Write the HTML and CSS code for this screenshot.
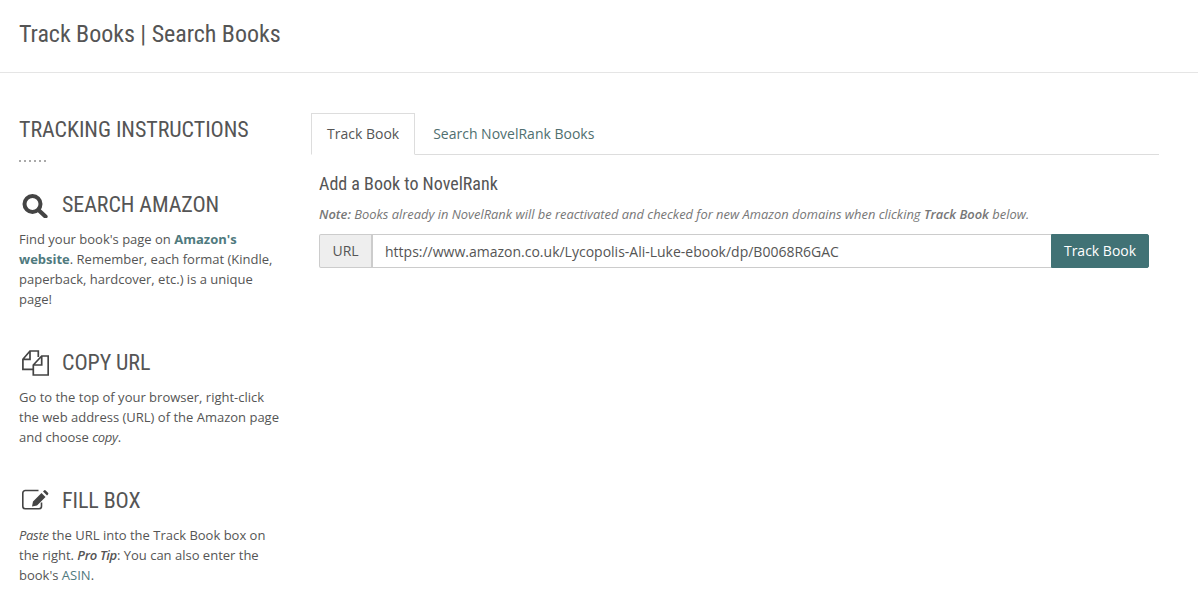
FILE: index.html
```html
<!DOCTYPE html>
<html lang="en">

<head>
    <meta charset="UTF-8">
    <title>Track Books | Search Books</title>
    <link rel="stylesheet" href="styles.css">
</head>

<body>
    <header class="page-header">
        <h1>Track Books | Search Books</h1>
    </header>

    <div class="page-content">
        <aside class="sidebar">
            <h2 class="sidebar-title">TRACKING INSTRUCTIONS</h2>
            <div class="dots"></div>

            <section class="step">
                <h3 class="step-title">
                    <svg class="step-icon" viewBox="0 0 27 26" width="27" height="26">
                        <circle cx="10.500" cy="12" r="8" fill="none" stroke="#444" stroke-width="4"/>
                        <path d="M16.500 18l7 6.500" fill="none" stroke="#444" stroke-width="4.200" stroke-linecap="round"/>
                    </svg>
                    SEARCH AMAZON
                </h3>
                <p>Find your book's page on <a class="strong-link" href="#">Amazon's website</a>. Remember, each format (Kindle, paperback, hardcover, etc.) is a unique page!</p>
            </section>

            <section class="step">
                <h3 class="step-title">
                    <svg class="step-icon" viewBox="0 0 27 26" width="27" height="26">
                        <path d="M11.300 19.300H.9V9.300L8 1h8.300v6M8 1v8.300H.9" fill="none" stroke="#444" stroke-width="1.700"/>
                        <path d="M19.700 6h6.500v19H11.300V15zM19.700 6v9h-8.400" fill="none" stroke="#444" stroke-width="1.700"/>
                    </svg>
                    COPY URL
                </h3>
                <p>Go to the top of your browser, right-click the web address (URL) of the Amazon page and choose <em>copy</em>.</p>
            </section>

            <section class="step">
                <h3 class="step-title">
                    <svg class="step-icon" viewBox="0 0 27 26" width="27" height="26">
                        <path d="M19.500 14.500v3.800a2.500 2.500 0 0 1-2.500 2.500H3.300a2.500 2.500 0 0 1-2.500-2.500V5a2.500 2.500 0 0 1 2.500-2.500h13.200" fill="none" stroke="#444" stroke-width="1.600"/>
                        <path d="M11 13.500L19.500 5l4 4L15 17.500l-5 1zM21 3.500l1-1a1.200 1.200 0 0 1 1.700 0l2.300 2.300a1.200 1.200 0 0 1 0 1.700l-1 1z" fill="#444"/>
                    </svg>
                    FILL BOX
                </h3>
                <p><em>Paste</em> the URL into the Track Book box on the right. <strong><em>Pro Tip</em></strong>: You can also enter the book's <a href="#">ASIN</a>.</p>
            </section>
        </aside>

        <main class="main">
            <ul class="tabs">
                <li class="tab active">Track Book</li>
                <li class="tab">Search NovelRank Books</li>
            </ul>
            <div class="tab-pane">
                <h4 class="pane-title">Add a Book to NovelRank</h4>
                <p class="note"><strong>Note:</strong> Books already in NovelRank will be reactivated and checked for new Amazon domains when clicking <strong>Track Book</strong> below.</p>
                <form class="input-group">
                    <span class="input-label">URL</span>
                    <input class="input-url" type="text" value="https://www.amazon.co.uk/Lycopolis-Ali-Luke-ebook/dp/B0068R6GAC">
                    <button class="btn" type="button">Track Book</button>
                </form>
            </div>
        </main>
    </div>
</body>

</html>
```

FILE: styles.css
```css
/* Basic Reset */
* {
    box-sizing: border-box;
    margin: 0;
    padding: 0;
}

body {
    font-family: 'Open Sans', sans-serif;
    font-size: 13px;
    line-height: 20px;
    color: #555;
    background-color: #fff;
}

a {
    color: #4f7a7e;
    text-decoration: none;
}

em {
    letter-spacing: -0.3px;
}

strong {
    font-weight: 600;
}

/* Page Header */
.page-header {
    height: 73px;
    padding: 20px 19px 0;
    border-bottom: 1px solid #e5e5e5;
}

.page-header h1,
.sidebar-title,
.step-title,
.pane-title {
    font-family: 'Roboto', sans-serif;
    font-stretch: condensed;
    font-weight: 400;
    color: #555;
}

.page-header h1 {
    font-size: 24px;
    line-height: 28px;
    letter-spacing: -0.04px;
}

/* Layout */
.page-content {
    display: flex;
    padding: 41px 39px 0 19px;
}

.sidebar {
    width: 262px;
    flex-shrink: 0;
    margin-right: 30px;
}

.main {
    flex: 1;
    margin-top: -1px;
}

/* Sidebar */
.sidebar-title {
    font-size: 22px;
    line-height: 32px;
    letter-spacing: -0.05px;
}

.dots {
    width: 30px;
    height: 2px;
    margin-top: 14px;
    background-image: linear-gradient(to right, #aaa 2px, transparent 2px);
    background-size: 5px 2px;
}

.step {
    margin-top: 28px;
}

.step + .step {
    margin-top: 39px;
}

.step-title {
    display: flex;
    align-items: center;
    font-size: 22px;
    line-height: 30px;
    margin-bottom: 9px;
    letter-spacing: -0.08px;
}

.step-icon {
    margin: 0 13px 0 3px;
}

.strong-link {
    font-weight: 700;
}

/* Tabs */
.tabs {
    display: flex;
    list-style: none;
    border-bottom: 1px solid #ddd;
}

.tab {
    font-size: 14px;
    line-height: 20px;
    padding: 10px 17px 10px;
    color: #4f6f70;
    margin-bottom: -1px;
    border: 1px solid transparent;
    height: 42px;
}

.tab.active {
    color: #555;
    padding: 10px 15px;
    border: 1px solid #ddd;
    border-bottom-color: #fff;
}

.tab-pane {
    padding: 18px 10px 0 8px;
}

.pane-title {
    font-size: 18px;
    line-height: 22px;
    margin-bottom: 9px;
}

.note {
    font-size: 12.9px;
    font-style: italic;
    color: #777;
    margin-bottom: 10px;
}

/* URL Input */
.input-group {
    display: flex;
    height: 34px;
}

.input-label {
    width: 54px;
    text-align: center;
    font-size: 14px;
    line-height: 32px;
    color: #555;
    background: #eee;
    border: 1px solid #ccc;
    border-right-width: 2px;
    border-radius: 2px 0 0 2px;
}

.input-url {
    flex: 1;
    min-width: 0;
    font-family: 'Open Sans', sans-serif;
    font-size: 14px;
    color: #555;
    padding: 0 12px;
    border: 1px solid #ccc;
    border-left: none;
    border-right: none;
    outline: none;
}

.btn {
    width: 98px;
    font-family: 'Open Sans', sans-serif;
    font-size: 14px;
    color: #fff;
    background: #417275;
    border: 1px solid #417275;
    border-radius: 0 2px 2px 0;
    padding-bottom: 2px;
}
```
